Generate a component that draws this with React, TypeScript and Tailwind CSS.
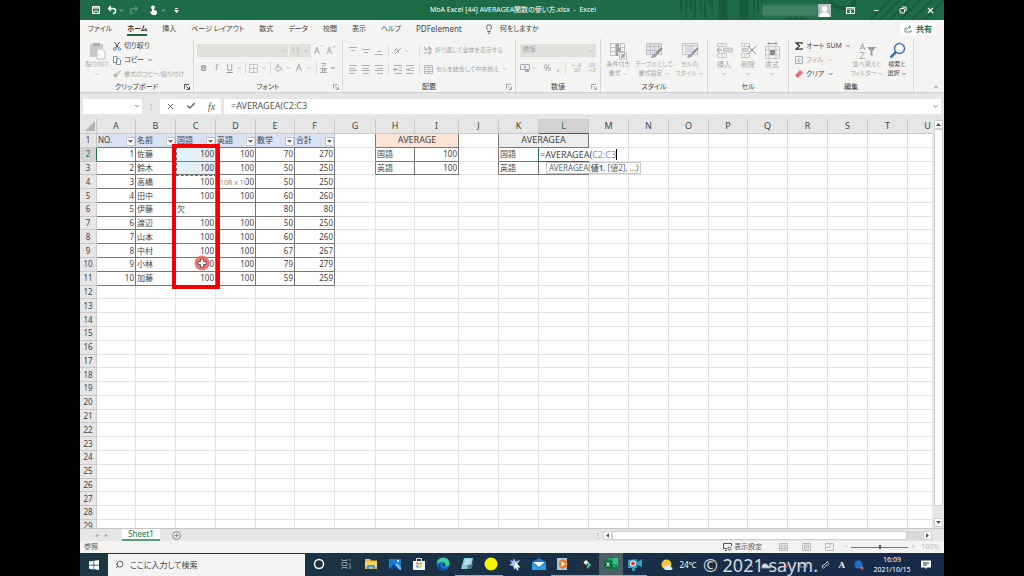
import type { ReactNode } from "react";
import clsx from "clsx";
import { Check, ChevronDown, ChevronUp, Lightbulb, Minus, Search, X } from "lucide-react";

type CellValue = { text: string; right?: boolean };

const columns = [
  { id: "A", width: "w-[39px]" },
  { id: "B", width: "w-[40px]" },
  { id: "C", width: "w-[40px]" },
  { id: "D", width: "w-[40px]" },
  { id: "E", width: "w-[39px]" },
  { id: "F", width: "w-[40px]" },
  { id: "G", width: "w-[41px]" },
  { id: "H", width: "w-[39px]" },
  { id: "I", width: "w-[44px]" },
  { id: "J", width: "w-[40px]" },
  { id: "K", width: "w-[40px]" },
  { id: "L", width: "w-[50px]" },
  { id: "M", width: "w-[40px]" },
  { id: "N", width: "w-[40px]" },
  { id: "O", width: "w-[40px]" },
  { id: "P", width: "w-[39px]" },
  { id: "Q", width: "w-[40px]" },
  { id: "R", width: "w-[40px]" },
  { id: "S", width: "w-[40px]" },
  { id: "T", width: "w-[40px]" },
  { id: "U", width: "w-[40px]" },
];

const rows = Array.from({ length: 29 }, (_, i) => i + 1);

const fieldNames = ["NO.", "名前", "国語", "英語", "数学", "合計"];

const students: (string | number)[][] = [
  [1, "佐藤", 100, 100, 70, 270],
  [2, "鈴木", 100, 100, 50, 250],
  [3, "高橋", 100, 100, 50, 250],
  [4, "田中", 100, 100, 60, 260],
  [5, "伊藤", "欠", "", 80, 80],
  [6, "渡辺", 100, 100, 50, 250],
  [7, "山本", 100, 100, 60, 260],
  [8, "中村", 100, 100, 67, 267],
  [9, "小林", 100, 100, 79, 279],
  [10, "加藤", 100, 100, 59, 259],
];

const summary: Record<string, CellValue> = {
  H2: { text: "国語" },
  I2: { text: "100", right: true },
  H3: { text: "英語" },
  I3: { text: "100", right: true },
  K2: { text: "国語" },
  K3: { text: "英語" },
};

const tabs = ["ファイル", "ホーム", "挿入", "ページ レイアウト", "数式", "データ", "校閲", "表示", "ヘルプ", "PDFelement"];

function getCell(col: number, row: number): CellValue | undefined {
  if (col < 6 && row >= 2 && row <= 11) {
    const value = students[row - 2][col];
    return { text: String(value), right: typeof value === "number" };
  }
  return summary[`${columns[col].id}${row}`];
}

function isTable(col: number, row: number) {
  if (row < 1 || col < 0) return false;
  if (col < 6) return row <= 11;
  return row <= 3 && (col === 7 || col === 8 || col === 10 || col === 11);
}

function Chevron({ dark = false }: { dark?: boolean }) {
  return <ChevronDown size={6} strokeWidth={3} className={clsx("shrink-0", dark ? "text-[#555]" : "text-[#b4b4b4]")} />;
}

function Divider() {
  return <span className="h-3 w-px shrink-0 bg-[#dcdcdc]" />;
}

function Launcher({ dark = false }: { dark?: boolean }) {
  return (
    <button aria-label="詳細" className="absolute right-[3px] bottom-[2px]">
      <svg width="6" height="6" viewBox="0 0 6 6" fill="none" stroke={dark ? "#555" : "#aaa"}>
        <path d="M.5 5V.5H5M2 2l3 3M5.5 2.5v3h-3" />
      </svg>
    </button>
  );
}

function Group({
  label,
  width,
  launcher,
  children,
}: {
  label: string;
  width: string;
  launcher?: "dark" | "light";
  children: ReactNode;
}) {
  return (
    <section className={clsx("relative flex shrink-0 flex-col border-r border-[#d6d6d6]", width)}>
      <div className="flex h-[43px] shrink-0">{children}</div>
      <h2 className="text-center text-[7px] leading-[10px] text-[#444]">{label}</h2>
      {launcher && <Launcher dark={launcher === "dark"} />}
    </section>
  );
}

function SmallButton({
  icon,
  label,
  dark,
  arrow,
  long,
}: {
  icon: ReactNode;
  label: string;
  dark?: boolean;
  arrow?: boolean;
  long?: boolean;
}) {
  return (
    <button
      className={clsx(
        "flex h-[14px] items-center gap-[3px] whitespace-nowrap",
        long ? "text-[6px]" : "text-[7px]",
        dark ? "text-[#444]" : "text-[#a8a8a8]",
      )}
    >
      <span className="shrink-0">{icon}</span>
      <span>{label}</span>
      {arrow && <Chevron dark={dark} />}
    </button>
  );
}

function LargeButton({
  icon,
  lines,
  width,
  dark,
  arrowBelow,
  size = "text-[6px]",
}: {
  icon: ReactNode;
  lines: string[];
  width: string;
  dark?: boolean;
  arrowBelow?: boolean;
  size?: string;
}) {
  return (
    <button className={clsx("flex shrink-0 flex-col items-center pt-[2px] leading-[9px] whitespace-nowrap", size, width, dark ? "text-[#444]" : "text-[#a8a8a8]")}>
      <span className="flex h-[19px] items-center">{icon}</span>
      {lines.map((line, i) => (
        <span key={line} className="flex items-center gap-px">
          {line}
          {i === 1 && <Chevron dark={dark} />}
        </span>
      ))}
      {arrowBelow && (
        <span className="flex h-[9px] items-center">
          <Chevron />
        </span>
      )}
    </button>
  );
}

function AlignIcon({ lines }: { lines: [number, number, number][] }) {
  return (
    <svg width="9" height="9" viewBox="0 0 9 9" stroke="#b0b0b0">
      {lines.map(([y, x1, x2]) => (
        <path key={y} d={`M${x1} ${y}H${x2}`} />
      ))}
    </svg>
  );
}

function IndentIcon({ out = false }: { out?: boolean }) {
  return (
    <svg width="10" height="9" viewBox="0 0 10 9" fill="none" stroke="#b0b0b0">
      <path d="M1 .5h8M6 3h3M6 5.5h3M1 8.5h8" />
      <path d={out ? "M5 4.5H1M2.500 3L1 4.500L2.500 6" : "M1 4.500H5M3.500 3L5 4.500L3.500 6"} stroke="#8ba0bd" />
    </svg>
  );
}

function TitleBar() {
  return (
    <header className="relative flex h-5 items-center bg-[#1e6c46] text-white">
      <svg className="absolute top-0 right-0" width="270" height="20" viewBox="0 0 270 20" fill="none" stroke="#185c3a">
        <path d="M7 0v14M12 0v18M17 0v12M21 0v18M27 0v14M31 0v18M48 0v14" strokeWidth="2" />
        <path d="M33 0h6v12z" fill="#185c3a" stroke="none" />
        <path d="M49 0v20M70 0v20" strokeWidth="9" />
        <path d="M80 0v18M84 0v14M88 0v18M92 0v12" strokeWidth="2" />
        <path d="M116 15v5M122 15v5M128 14v6" strokeWidth="3" />
        <path d="M157 0c2 10 22 12 24 0" strokeWidth="4" />
        <path d="M196 20L216 0M206 20L226 0M216 20L236 0M226 20L246 0M238 20L258 0M250 20L270 0" strokeWidth="2" />
      </svg>
      <div className="flex flex-1 items-center gap-[3px] pl-[11px]">
        <button aria-label="上書き保存">
          <svg width="10" height="10" viewBox="0 0 10 10" fill="none" stroke="#fff">
            <path d="M1.500 1.500h7v7h-7zM3 8V6h4v2" />
            <path d="M2 3h6" strokeWidth="2" opacity=".6" />
          </svg>
        </button>
        <button aria-label="元に戻す" className="ml-[3px] flex items-center gap-[2px]">
          <svg width="10" height="10" viewBox="0 0 10 10" fill="none" stroke="#fff" strokeWidth="1.400">
            <path d="M4 1L1.500 3.500L4 6M1.500 3.500H6c3.500 0 3.500 5 0 5" />
          </svg>
          <ChevronDown size={5} strokeWidth={3} />
        </button>
        <button aria-label="やり直し" className="ml-[2px] flex items-center gap-[2px] opacity-25">
          <svg width="10" height="10" viewBox="0 0 10 10" fill="none" stroke="#fff" strokeWidth="1.400">
            <path d="M6 1l2.500 2.500L6 6M8.500 3.500H4c-3.500 0-3.500 5 0 5" />
          </svg>
          <ChevronDown size={5} strokeWidth={3} />
        </button>
        <button aria-label="タッチ/マウス モードの切り替え" className="flex items-center gap-[3px]">
          <svg width="9" height="10" viewBox="0 0 9 10" fill="#fff">
            <circle cx="4" cy="2.500" r="2" />
            <path d="M3 2h2v3l3 1v2L7 10H3L1 7l2-1z" />
          </svg>
          <ChevronDown size={5} strokeWidth={3} />
        </button>
        <button aria-label="クイック アクセス ツール バーのユーザー設定" className="ml-[5px]">
          <svg width="5" height="5" viewBox="0 0 5 5" fill="#fff">
            <path d="M1 0h3v1H1zM0 2h5L2.500 5z" />
          </svg>
        </button>
      </div>
      <h1 className="text-[7px] whitespace-pre">MoA Excel [44] AVERAGEA関数の使い方.xlsx  -  Excel</h1>
      <div className="relative flex flex-1 items-center justify-end pr-[9px]">
        <span className="h-[11px] w-[56px] bg-[#4c8969] opacity-80 blur-[1px]" />
        <svg width="13" height="13" viewBox="0 0 12 12" className="mr-[15px]">
          <path d="M0 0h12v12H0z" fill="#b9c4be" />
          <circle cx="6" cy="4.500" r="2.600" fill="#fff" />
          <path d="M1 12c0-6 10-6 10 0z" fill="#fff" />
        </svg>
        <button aria-label="リボンの表示オプション" className="mr-[18px]">
          <svg width="9" height="9" viewBox="0 0 9 9" fill="none" stroke="#fff">
            <path d="M.5 1.500h8v6h-8zM.5 3h8M4.500 7V4.500M3.500 5.500l1-1l1 1" />
          </svg>
        </button>
        <button aria-label="最小化" className="mr-[19px]">
          <Minus size={7} strokeWidth={3} />
        </button>
        <button aria-label="元に戻す(縮小)" className="mr-[19px]">
          <svg width="8" height="8" viewBox="0 0 8 8" fill="none" stroke="#fff">
            <rect x="1" y="2.500" width="4.500" height="4.500" rx="1" />
            <path d="M3 1h4v4" />
          </svg>
        </button>
        <button aria-label="閉じる">
          <X size={9} strokeWidth={3} />
        </button>
      </div>
    </header>
  );
}

function TabBar() {
  return (
    <nav className="flex h-[18px] items-center pr-2 pl-2 text-[7px] text-[#444]">
      <div className="flex items-center gap-[15px]">
        {tabs.map((tab) => (
          <button
            key={tab}
            className={clsx(
              "h-[14px] border-b-2 leading-[13px] whitespace-nowrap",
              tab === "ホーム" ? "border-[#1e6c46] font-bold text-[#333]" : "border-transparent",
              tab === "PDFelement" && "text-[8px]",
            )}
          >
            {tab}
          </button>
        ))}
      </div>
      <button className="ml-[22px] flex items-center gap-[6px]">
        <Lightbulb size={10} />
        何をしますか
      </button>
      <button className="ml-auto flex h-3 items-center gap-1 bg-white px-1 text-[8px] font-bold text-[#1e6c46]">
        <svg width="8" height="8" viewBox="0 0 8 8" fill="none" stroke="#5b9676">
          <path d="M2.500 3H1v4h6V5M3 5c0-2 1-3 3.500-3M5 .5L6.800 2L5 3.500" />
        </svg>
        共有
      </button>
    </nav>
  );
}

function Ribbon() {
  return (
    <div className="flex h-[55px] border-b border-[#d0d0d0] pt-px">
      <Group label="クリップボード" width="w-[114px]" launcher="dark">
        <LargeButton
          width="w-[24px] ml-[5px]"
          lines={["貼り付け"]}
          arrowBelow
          icon={
            <svg width="17" height="18" viewBox="0 0 17 18">
              <path d="M1 2h13v13H1z" fill="#c9c7c7" />
              <path d="M4 1h7v3H4z" fill="#b0aeae" />
              <path d="M8 7h5l3 3v7H8z" fill="#fafafa" stroke="#c2c2c8" />
            </svg>
          }
        />
        <div className="ml-[4px] flex flex-col">
          <SmallButton
            dark
            label="切り取り"
            icon={
              <svg width="8" height="9" viewBox="0 0 8 9" fill="none" stroke="#555">
                <path d="M1.500 0l4 6M6.500 0l-4 6" />
                <circle cx="1.700" cy="7" r="1.300" stroke="#5b8ac0" />
                <circle cx="6.300" cy="7" r="1.300" stroke="#5b8ac0" />
              </svg>
            }
          />
          <SmallButton
            dark
            arrow
            label="コピー"
            icon={
              <svg width="8" height="9" viewBox="0 0 8 9" fill="#fff" stroke="#7c8ea3">
                <path d="M.5.5H4v6H.5zM3.500 2.500H6l1.500 1.500v4.500h-4z" />
              </svg>
            }
          />
          <SmallButton
            long
            label="書式のコピー/貼り付け"
            icon={
              <svg width="8" height="8" viewBox="0 0 8 8" fill="#b4b4b4">
                <path d="M7.500 0L8 1L5 4L4 3zM3 3l2 2l-2 3L0 5z" />
              </svg>
            }
          />
        </div>
      </Group>

      <Group label="フォント" width="w-[149px]" launcher="light">
        <div className="flex flex-col gap-[3px] pt-[5px] pl-[3px]">
          <div className="flex h-[13px] items-center text-[9px] text-[#9a9a9a]">
            <button aria-label="フォント名" className="mr-px flex h-full w-[91px] items-center justify-end bg-[#e1e0dc] pr-[2px]">
              <Chevron />
            </button>
            <button aria-label="フォント サイズ" className="mr-[3px] flex h-full w-[22px] items-center justify-between bg-[#e1e0dc] px-[2px] text-[8px] text-[#bbb]">
              11 <Chevron />
            </button>
            <button className="mr-[3px] flex">A<ChevronUp size={4} strokeWidth={4} /></button>
            <button className="flex text-[8px]">A<ChevronDown size={4} strokeWidth={4} /></button>
          </div>
          <div className="flex h-[16px] items-center text-[9px] text-[#999]">
            <button className="w-[13px] font-bold">B</button>
            <button className="w-[13px] font-['Liberation_Serif',serif] italic">I</button>
            <button className="w-[13px] underline">U</button>
            <Chevron />
            <span className="w-[3px]" />
            <Divider />
            <button aria-label="罫線" className="mx-[3px]">
              <svg width="9" height="9" viewBox="0 0 9 9" fill="none" stroke="#c4c4c4">
                <path d="M.5.5h8v8h-8zM4.500 0v9M0 4.500h9" />
              </svg>
            </button>
            <Chevron />
            <span className="w-[3px]" />
            <Divider />
            <button aria-label="塗りつぶしの色" className="mx-[3px]">
              <svg width="9" height="9" viewBox="0 0 9 9" fill="none" stroke="#aaa">
                <path d="M4 1L1 4.500L4 7.500L7 4.500zM4 0v4M8 5v2" />
              </svg>
            </button>
            <Chevron />
            <button className="w-[14px]">A</button>
            <Chevron />
            <span className="w-[4px]" />
            <Divider />
            <button aria-label="ふりがな" className="mx-[3px]">
              <svg width="7" height="10" viewBox="0 0 7 10" fill="none" stroke="#999">
                <path d="M1 .5h5L4 3M3 2v2M0 5.500h7M1.500 7.500h4v-2M0 9.500h7M2.500 5.500v4M4.500 5.500v4" strokeWidth=".8" />
              </svg>
            </button>
            <Chevron dark />
          </div>
        </div>
      </Group>

      <Group label="配置" width="w-[173px]" launcher="light">
        <div className="flex flex-col gap-[3px] pt-[4px] pl-[6px]">
          <div className="flex h-[15px] items-center gap-1">
            <button aria-label="上揃え"><AlignIcon lines={[[1.5, 0, 8], [4.5, 2, 6]]} /></button>
            <button aria-label="上下中央揃え"><AlignIcon lines={[[3.5, 0, 8], [6.5, 2, 6]]} /></button>
            <button aria-label="下揃え"><AlignIcon lines={[[5.5, 2, 6], [8.5, 0, 8]]} /></button>
            <Divider />
            <button aria-label="方向" className="flex items-center gap-[2px]">
              <svg width="9" height="9" viewBox="0 0 9 9" fill="none" stroke="#b0b0b0">
                <path d="M1 5l3-3M2 8l6-6M5 7.500a2 2 0 1 0-3-3" />
              </svg>
              <Chevron />
            </button>
            <span className="w-px" />
            <Divider />
            <SmallButton
              long
              label="折り返して全体を表示する"
              icon={
                <svg width="8" height="9" viewBox="0 0 8 9" fill="none" stroke="#a8a8a8">
                  <path d="M1 1v3h2V2M5 0v4h2V2H5M0 7h3M7 5v2H4M5.500 5.500L4 7l1.500 1.500" />
                </svg>
              }
            />
          </div>
          <div className="flex h-[16px] items-center gap-1">
            <button aria-label="左揃え"><AlignIcon lines={[[0.5, 0, 8], [3.5, 0, 6], [5.5, 0, 8], [8.5, 0, 6]]} /></button>
            <button aria-label="中央揃え"><AlignIcon lines={[[0.5, 0, 8], [3.5, 1, 7], [5.5, 0, 8], [8.5, 1, 7]]} /></button>
            <button aria-label="右揃え"><AlignIcon lines={[[0.5, 0, 8], [3.5, 2, 8], [5.5, 0, 8], [8.5, 2, 8]]} /></button>
            <Divider />
            <div className="flex gap-[2px]">
              <button aria-label="インデントを減らす"><IndentIcon out /></button>
              <button aria-label="インデントを増やす"><IndentIcon /></button>
            </div>
            <Divider />
            <SmallButton
              long
              arrow
              label="セルを結合して中央揃え"
              icon={
                <svg width="9" height="9" viewBox="0 0 9 9" fill="none" stroke="#b4b8c4">
                  <path d="M.5.5h8v8h-8zM0 2.500h9M0 6.500h9M4.500 0v2M4.500 7v2M2 4.500h5" />
                </svg>
              }
            />
          </div>
        </div>
      </Group>

      <Group label="数値" width="w-[85px]" launcher="light">
        <div className="flex flex-1 flex-col gap-[3px] pt-[5px] pr-[4px] pl-[4px]">
          <button className="flex h-[13px] items-center justify-between bg-[#e1e0dc] px-[2px] text-[7px] text-[#a8a8a8]">
            標準 <Chevron />
          </button>
          <div className="flex h-[16px] items-center justify-between text-[9px] text-[#a0a0a0]">
            <button aria-label="通貨表示形式" className="flex items-center gap-[2px]">
              <svg width="10" height="9" viewBox="0 0 10 9" fill="none" stroke="#a4abb5">
                <path d="M.5.5h9v5h-9z" />
                <circle cx="5" cy="3" r="1" />
                <path d="M5 7h4" strokeWidth="2" />
              </svg>
              <Chevron />
            </button>
            <button>%</button>
            <button className="font-bold">,</button>
            <Divider />
            <button className="text-[5px] leading-[5px]">←.0<br />.00</button>
            <button className="text-[5px] leading-[5px]">.00<br />→.0</button>
          </div>
        </div>
      </Group>

      <Group label="スタイル" width="w-[107px]">
        <LargeButton
          width="w-[34px]"
          lines={["条件付き", "書式"]}
          icon={
            <svg width="18" height="18" viewBox="0 0 18 18" fill="none" stroke="#c4c0c8">
              <path d="M1.500 1.500h14v12h-14zM1 5.500h15M1 9.500h15M6.500 1v13M11.500 1v13" />
              <path d="M7 2h3v4H7zM7 6h5v4H7zM7 10h2v4H7z" fill="#a5a3a5" stroke="none" />
              <path d="M10.500 10.500h7v7h-7z" fill="#f8f8f8" />
              <path d="M12 13h4M12 15h4M15.500 11.500l-3 5" stroke="#888" />
            </svg>
          }
        />
        <LargeButton
          width="w-[38px]"
          lines={["テーブルとして", "書式設定"]}
          icon={
            <svg width="18" height="17" viewBox="0 0 18 17" fill="none" stroke="#c4c0c8">
              <path d="M1.500 1.500h15v11h-15z" fill="#e4e2ea" />
              <path d="M1 4.500h16M1 8.500h16M5.500 1v12M9.500 1v12M13.500 1v12" />
              <path d="M17 6l-6 6" stroke="#8e8e8e" strokeWidth="2" />
              <path d="M6 16c1-4 3-5 5-4s0 4-5 4z" fill="#a5a3a5" stroke="none" />
            </svg>
          }
        />
        <LargeButton
          width="w-[33px]"
          lines={["セルの", "スタイル"]}
          icon={
            <svg width="18" height="17" viewBox="0 0 18 17" fill="none" stroke="#c4c0c8">
              <path d="M1.500 1.500h15v11h-15zM4.500 1v12M1 3.500h16" />
              <path d="M4 4h10v7H4z" fill="#dcdae4" stroke="none" />
              <path d="M17 6l-6 6" stroke="#8e8e8e" strokeWidth="2" />
              <path d="M6 16c1-4 3-5 5-4s0 4-5 4z" fill="#a5a3a5" stroke="none" />
            </svg>
          }
        />
      </Group>

      <Group label="セル" width="w-[81px]">
        <LargeButton
          width="ml-[4px] w-[24px]"
          size="text-[7px]"
          lines={["挿入"]}
          arrowBelow
          icon={
            <svg width="17" height="17" viewBox="0 0 17 17" fill="none" stroke="#c6c6c6">
              <path d="M1.500 1.500h9v3h-9zM6 1v4M1.500 11.500h9v4h-9zM6 11v5" />
              <path d="M7.500 6h9v4h-9z" fill="#d4d2da" />
              <path d="M6 8H1M3.500 5.500L1 8l2.500 2.500" stroke="#999" />
            </svg>
          }
        />
        <LargeButton
          width="w-[24px]"
          size="text-[7px]"
          lines={["削除"]}
          arrowBelow
          icon={
            <svg width="17" height="17" viewBox="0 0 17 17" fill="none" stroke="#c6c6c6">
              <path d="M1.500 1.500h8v3h-8zM5 1v4M1.500 11.500h8v4h-8zM5 11v5" />
              <path d="M2 6.500h6v3H2z" fill="#d4d2da" />
              <path d="M8 4l8 8M16 4l-8 8" stroke="#8c8c8c" />
            </svg>
          }
        />
        <LargeButton
          width="w-[24px]"
          size="text-[7px]"
          lines={["書式"]}
          arrowBelow
          icon={
            <svg width="17" height="18" viewBox="0 0 17 18" fill="none" stroke="#c6c6c6">
              <path d="M1.500 4.500h14v12h-14zM1 8h15M1 13h15M5 4v13M12 4v13" />
              <path d="M6 8h5v5H6z" fill="#8c8c8c" stroke="none" />
              <path d="M4 1.500h9M5.500 0L4 1.500L5.500 3M11.500 0L13 1.500L11.500 3" stroke="#999" />
            </svg>
          }
        />
      </Group>

      <Group label="編集" width="w-[125px]">
        <div className="flex w-[60px] shrink-0 flex-col pl-[6px]">
          <SmallButton
            dark
            arrow
            label="オート SUM"
            icon={
              <svg width="8" height="8" viewBox="0 0 8 8" fill="none" stroke="#333" strokeWidth="1.300">
                <path d="M7 2V.8H1L4.500 4L1 7.200h6V6" />
              </svg>
            }
          />
          <SmallButton
            arrow
            label="フィル"
            icon={
              <svg width="8" height="8" viewBox="0 0 8 8" fill="none" stroke="#a6adb8">
                <path d="M.5.5h7v7h-7zM4 2v4M2.500 4.500L4 6l1.500-1.500" />
              </svg>
            }
          />
          <SmallButton
            dark
            arrow
            label="クリア"
            icon={
              <svg width="8" height="8" viewBox="0 0 8 8">
                <path d="M5 0l3 2.500L3 8L0 5.500z" fill="#e8707c" />
              </svg>
            }
          />
        </div>
        <LargeButton
          width="w-[36px]"
          lines={["並べ替えと", "フィルター"]}
          icon={
            <svg width="17" height="18" viewBox="0 0 17 18" fill="none" stroke="#a8a8a8">
              <path d="M1 8L3.500 1.500L6 8M2 6h3M1 10.500h4.500L1 16.500h5" />
              <path d="M8 5h9l-3.500 4v5l-2-1V9z" fill="#9c9c9c" stroke="none" />
            </svg>
          }
        />
        <LargeButton
          dark
          width="w-[24px]"
          lines={["検索と", "選択"]}
          icon={
            <svg width="17" height="17" viewBox="0 0 17 17" fill="none" stroke="#3f73ad">
              <circle cx="10.500" cy="6.500" r="5" strokeWidth="1.500" fill="#fff" />
              <path d="M7 10l-5.500 5.500" strokeWidth="2.500" />
            </svg>
          }
        />
      </Group>
      <button aria-label="リボンを折りたたむ" className="mt-auto mr-1 mb-px ml-auto">
        <ChevronUp size={8} className="text-[#555]" />
      </button>
    </div>
  );
}

function FormulaBar() {
  return (
    <div className="flex h-[26px] items-center bg-[#e6e6e6] pr-[3px] pl-[3px]">
      <div className="flex h-[15px] w-[59px] items-center bg-white pr-[2px]">
        <input aria-label="名前ボックス" className="w-full min-w-0 text-[8px] outline-none" />
        <Chevron dark />
      </div>
      <span className="w-[18px] text-center text-[8px] text-[#999]">⋮</span>
      <div className="flex h-[15px] w-[61px] items-center justify-around bg-white text-[#555]">
        <button aria-label="キャンセル"><X size={9} strokeWidth={2.5} /></button>
        <button aria-label="入力"><Check size={10} strokeWidth={3} /></button>
        <button aria-label="関数の挿入" className="font-['Liberation_Serif',serif] text-[10px] italic">fx</button>
      </div>
      <div className="ml-[3px] flex h-[15px] flex-1 items-center bg-white pr-[2px] pl-[7px]">
        <input aria-label="数式バー" defaultValue="=AVERAGEA(C2:C3" className="flex-1 text-[9px] text-[#555] outline-none" />
        <ChevronDown size={7} strokeWidth={3} className="text-[#666]" />
      </div>
    </div>
  );
}

function Sheet() {
  return (
    <div className="relative min-w-0 flex-1 overflow-hidden bg-white">
      <table className="h-[415px] w-[857px] table-fixed border-separate border-spacing-0 text-[8px] leading-[12px] text-[#444]">
        <colgroup>
          <col className="w-[17px]" />
          {columns.map((col) => (
            <col key={col.id} className={col.width} />
          ))}
        </colgroup>
        <thead>
          <tr className="h-[15px] bg-[#e6e6e6] text-[9px]">
            <th className="border-r border-b border-[#c6c6c6]">
              <svg width="11" height="11" viewBox="0 0 11 11" className="ml-auto">
                <path d="M10 0v10H0z" fill="#b4b4b4" />
              </svg>
            </th>
            {columns.map((col) => (
              <th
                key={col.id}
                scope="col"
                className={clsx(
                  "border-r border-b font-normal",
                  col.id === "L" ? "border-[#c6c6c6] border-b-[#217346] bg-[#d2d2d2] text-[#217346]" : "border-[#c9c9c9]",
                )}
              >
                {col.id}
              </th>
            ))}
          </tr>
        </thead>
        <tbody>
          {rows.map((row) => (
            <tr key={row}>
              <th
                scope="row"
                className={clsx(
                  "border-r border-b border-[#c9c9c9] font-normal",
                  row === 2 ? "border-r-[#217346] bg-[#d2d2d2] text-[#217346]" : "bg-[#e6e6e6]",
                )}
              >
                {row}
              </th>
              {columns.map((col, i) => {
                if (row === 1 && i < 6) {
                  return (
                    <td key={col.id} className="border-r border-b border-[#777] border-r-[#aebbd4] bg-[#d9e1f2] pl-px">
                      <div className="flex h-[12px] items-center justify-between">
                        {fieldNames[i]}
                        <button aria-label={`${fieldNames[i]} フィルター`} className="mt-[2px] flex size-[9px] items-center justify-center border border-[#c8c8c8] bg-white">
                          <svg width="5" height="3" viewBox="0 0 5 3">
                            <path d="M0 0h5L2.500 3z" fill="#666" />
                          </svg>
                        </button>
                      </div>
                    </td>
                  );
                }
                if (row === 1 && (col.id === "H" || col.id === "K")) {
                  return (
                    <td
                      key={col.id}
                      colSpan={2}
                      className={clsx("border-r border-b border-[#777] text-center text-[9px]", col.id === "H" ? "bg-[#fce4d6]" : "bg-[#ededed]")}
                    >
                      {col.id === "H" ? "AVERAGE" : "AVERAGEA"}
                    </td>
                  );
                }
                if (row === 1 && (col.id === "I" || col.id === "L")) return null;
                const cell = getCell(i, row);
                return (
                  <td
                    key={col.id}
                    className={clsx(
                      "border-r border-b px-px",
                      isTable(i, row) || isTable(i + 1, row) ? "border-r-[#777]" : "border-r-[#e2e2e2]",
                      isTable(i, row) ? "border-b-[#777]" : "border-b-[#e2e2e2]",
                      cell?.right && "text-right",
                      col.id === "C" && (row === 2 || row === 3) && "bg-[#e5eff7]",
                    )}
                  >
                    {cell?.text}
                  </td>
                );
              })}
            </tr>
          ))}
        </tbody>
      </table>

      {/* Range being picked */}
      <div className="absolute top-[28px] left-[96px] h-[29px] w-[41px] border border-dashed border-[#2f7f78]" />
      <div className="absolute top-[58px] left-[140px] w-[26px] overflow-hidden bg-white text-[7px] leading-[11px] whitespace-nowrap text-[#888]">10R x 1C</div>

      {/* In-cell editor */}
      <div className="absolute top-[29px] left-[458px] flex h-[13px] w-[81px] items-center border-l border-[#217346] bg-white pl-px text-[9px] text-[#444]">
        =AVERAGEA(<span className="text-[#6b96cc]">C2:C3</span>
        <span className="h-[11px] w-px bg-black" />
      </div>
      <div className="absolute top-[42px] left-[458px] h-px w-[51px] bg-[#217346]" />
      <div className="absolute top-[43px] left-[466px] border border-[#c8c8c8] bg-white px-[2px] text-[8px] leading-[10px] whitespace-nowrap text-[#666]">
        AVERAGEA(<b>値1</b>, [値2], ...)
      </div>

      {/* Highlight frame */}
      <div className="absolute top-[25px] left-[92px] h-[145px] w-[48px] border-4 border-[#f40000]" />
      <svg className="absolute top-[136px] left-[114px]" width="16" height="16" viewBox="0 0 16 16">
        <circle cx="8" cy="8" r="7.500" fill="#ec6a62" opacity=".9" />
        <path d="M6.500 4h3v2.500H12v3H9.500V12h-3V9.500H4v-3h2.500z" fill="#fff" stroke="#444" strokeWidth=".8" />
      </svg>
    </div>
  );
}

function ScrollArrow({ d, label }: { d: string; label: string }) {
  return (
    <button aria-label={label} className="flex size-[9px] shrink-0 items-center justify-center border border-[#d0d0d0] bg-white">
      <svg width="5" height="5" viewBox="0 0 5 5" fill="#555">
        <path d={d} />
      </svg>
    </button>
  );
}

function SheetTabs() {
  return (
    <div className="flex h-[13px] items-center border-t border-[#c6c6c6] bg-[#e6e6e6] pr-[12px]">
      <div className="flex w-[42px] justify-center gap-[7px] text-[6px] text-[#aaa]">
        <span>◂</span>
        <span>▸</span>
      </div>
      <button className="h-full w-[38px] border-b-2 border-[#5c9c7b] bg-white text-[8px] leading-[10px] text-[#217346]">Sheet1</button>
      <button aria-label="新しいシート" className="ml-[12px]">
        <svg width="9" height="9" viewBox="0 0 9 9" fill="none" stroke="#888">
          <circle cx="4.500" cy="4.500" r="4" />
          <path d="M4.500 2.500v4M2.500 4.500h4" />
        </svg>
      </button>
      <span className="ml-auto w-[9px] text-[8px] text-[#999]">⋮</span>
      <div className="flex w-[329px] items-center bg-[#dadada]">
        <ScrollArrow label="左へスクロール" d="M4 0v5L1 2.500z" />
        <span className="h-[9px] w-[295px] border border-[#d0d0d0] bg-white" />
        <span className="flex-1" />
        <ScrollArrow label="右へスクロール" d="M1 0v5l3-2.500z" />
      </div>
    </div>
  );
}

function StatusBar() {
  return (
    <div className="flex h-[12px] items-center bg-[#f3f3f2] pr-[5px] pl-1 text-[7px] text-[#555]">
      <span>参照</span>
      <button className="ml-auto flex items-center gap-[2px]">
        <svg width="9" height="8" viewBox="0 0 9 8" fill="none" stroke="#555">
          <path d="M4 5.500H.5v-5h8V3M2 7.500h2" />
          <circle cx="6.500" cy="5.500" r="1.500" />
        </svg>
        表示設定
      </button>
      <div className="ml-[17px] flex gap-[14px]">
        {["M.5.5h8v7h-8zM0 3h9M0 5.500h9M3 0v8M6 0v8", "M.5.5h8v7h-8zM2.500 2v4h4V2zM3 4h3", "M.5.5h8v7h-8zM5 0v4.500H0"].map((d) => (
          <button key={d} aria-label="表示モード">
            <svg width="9" height="8" viewBox="0 0 9 8" fill="none" stroke="#bbb">
              <path d={d} />
            </svg>
          </button>
        ))}
      </div>
      <div className="ml-[10px] flex items-center gap-[3px] text-[#bbb]">
        <button>−</button>
        <input
          type="range"
          aria-label="ズーム"
          min={10}
          max={400}
          defaultValue={205}
          className="h-px w-[57px] appearance-none bg-[#777] [&::-webkit-slider-thumb]:h-[4px] [&::-webkit-slider-thumb]:w-[2px] [&::-webkit-slider-thumb]:appearance-none [&::-webkit-slider-thumb]:bg-[#555]"
        />
        <button>+</button>
      </div>
      <span className="ml-[6px] text-[#bbb]">100%</span>
    </div>
  );
}

const apps: { name: string; running?: boolean; active?: boolean; icon: ReactNode }[] = [
  { name: "Cortana", icon: <circle cx="6" cy="7" r="4.500" fill="none" stroke="#fff" strokeWidth="1.500" /> },
  {
    name: "タスク ビュー",
    icon: <path d="M3 2v1.500h5V2M3 12v-1.500h5V12M3 5.500h5v3H3zM11 2v2M11 6v6" fill="none" stroke="#8d9ba3" />,
  },
  {
    name: "エクスプローラー",
    icon: (
      <>
        <path d="M1 2h5l1 1.500h6V12H1z" fill="#f5b93a" />
        <path d="M1 5h12v5H1z" fill="#fcd462" />
        <path d="M3 12V8h8v4H9v-2H5v2z" fill="#3f9be0" />
      </>
    ),
  },
  {
    name: "フォト",
    icon: (
      <>
        <path d="M1 2h12v11H1z" fill="#1b7ad1" />
        <path d="M1 12l5-5l6 6H1z" fill="#0c3f83" />
        <path d="M7 8l2-2l4 4v3h-1z" fill="#74baf0" />
        <circle cx="10" cy="4" r="1" fill="#fff" />
      </>
    ),
  },
  {
    name: "Microsoft Store",
    icon: (
      <>
        <path d="M4.500 4V1.500h5V4" fill="none" stroke="#e8e8e8" />
        <path d="M1 4h12v9H1z" fill="#f3f3f3" />
        <path d="M4.500 5.500h2v2h-2z" fill="#e5532d" />
        <path d="M7.500 5.500h2v2h-2z" fill="#7fb800" />
        <path d="M4.500 8.500h2v2h-2z" fill="#2a9fe0" />
        <path d="M7.500 8.500h2v2h-2z" fill="#f5b400" />
      </>
    ),
  },
  {
    name: "Microsoft Edge",
    icon: (
      <>
        <circle cx="7" cy="7" r="6.500" fill="#1679cc" />
        <path d="M1 6C2-1 14-1 13.500 7c0 2-4 3-5 1c1-3-2-4-4-3S1 6 1 6z" fill="#3ccf9b" />
        <path d="M5 6c-2 4 2 7 6 5c-3 4-8 2-9-1s1-4 3-4z" fill="#0c4f9c" />
        <circle cx="8" cy="7.500" r="1.500" fill="#1b3442" />
      </>
    ),
  },
  {
    name: "メモ帳",
    running: true,
    icon: (
      <>
        <path d="M4 1h9l-2 11H1z" fill="#8fc9de" />
        <path d="M5 3h6M4.500 5h6M4 7h6" stroke="#d8f0f8" />
        <path d="M8 8l5-1l-2 5H7z" fill="#557886" />
      </>
    ),
  },
  { name: "マーカー", running: true, icon: <circle cx="7" cy="7" r="6.500" fill="#fdf500" /> },
  {
    name: "ポインター",
    icon: (
      <>
        <path d="M6 1l1.500 3.500L12 3l-2.500 4l3 4l-4.500-1l-2 3l-1-4L1 8l3-2L2 3l3 1z" fill="#a9c0ea" />
        <path d="M7 5l5 5H9.500l1 3l-1.500.5l-1-3L7 12z" fill="#fff" />
      </>
    ),
  },
  {
    name: "メール",
    icon: (
      <>
        <path d="M0 5l7-4l7 4v8H0z" fill="#1479c9" />
        <path d="M1 5h12l-6 5z" fill="#f4f8fb" />
        <path d="M0 6l7 5l7-5v7H0z" fill="#2f9ee8" />
      </>
    ),
  },
  {
    name: "メディア プレーヤー",
    running: true,
    icon: (
      <>
        <path d="M1 1h10v12H1z" fill="#a8c9dd" />
        <circle cx="7" cy="7" r="4.500" fill="#ee7a28" />
        <path d="M5.500 4.500l4 2.500l-4 2.500z" fill="#fff" />
      </>
    ),
  },
  {
    name: "Filmora",
    running: true,
    icon: (
      <>
        <path d="M0 0h14v14H0z" fill="#233039" />
        <path d="M6 3l2.500 2.500L6 8L3.500 5.500z" fill="#fff" />
        <path d="M8 5l3 3l-4 4V9l1-1z" fill="#3fd3b4" />
      </>
    ),
  },
  {
    name: "Excel",
    running: true,
    active: true,
    icon: (
      <>
        <path d="M4 1h10v12H4z" fill="#21a366" />
        <path d="M9 1h5v6H9z" fill="#33c481" />
        <path d="M4 7h5v6H4zM9 10h5v3H9z" fill="#107c41" />
        <path d="M0 3.500h8v8H0z" fill="#0f6a38" />
        <path d="M2.500 5.500l3 4M5.500 5.500l-3 4" stroke="#fff" />
      </>
    ),
  },
  {
    name: "録画",
    running: true,
    icon: (
      <>
        <path d="M0 3l9-1v9H0zM9 5l5-3v8L9 8zM4 11h3v3H4z" fill="#2f9fc0" />
        <circle cx="5" cy="6.500" r="3" fill="#fff" />
        <circle cx="5" cy="6.500" r="2" fill="#e0322c" />
      </>
    ),
  },
];

function Taskbar() {
  return (
    <footer className="relative flex h-[23px] items-center bg-linear-to-r from-[#1c3642] to-[#182a4a] text-white">
      <button aria-label="スタート" className="flex w-[28px] justify-center">
        <svg width="10" height="10" viewBox="0 0 10 10" fill="#fff">
          <path d="M0 1.500L4.500.8v4H0zM5.200.7L10 0v4.800H5.200zM0 5.400h4.500v4L0 8.700zM5.200 5.400H10V10l-4.800-.7z" />
        </svg>
      </button>
      <label className="flex h-[22px] w-[197px] items-center gap-[6px] bg-[#f3f3f3] pl-[7px] text-[#333]">
        <Search size={9} className="-scale-x-100" />
        <input aria-label="検索" placeholder="ここに入力して検索" className="min-w-0 flex-1 text-[8px] outline-none placeholder:text-[#444]" />
      </label>
      <div className="flex h-full items-center pl-[2px]">
        {apps.map((app, i) => (
          <button
            key={app.name}
            aria-label={app.name}
            className={clsx(
              "flex h-full items-center justify-center border-b",
              i < 2 ? "w-[26px]" : "w-[24px]",
              app.running ? "border-[#7cb4dc]" : "border-transparent",
              app.active && "bg-[#4c606a]",
            )}
          >
            <svg width="14" height="14" viewBox="0 0 14 14">{app.icon}</svg>
          </button>
        ))}
      </div>
      <div className="ml-auto flex items-center pr-[13px] text-[7px] leading-[10px]">
        <button className="mr-[124px] flex items-center gap-[6px] text-[8px]">
          <svg width="12" height="12" viewBox="0 0 12 12">
            <circle cx="5.500" cy="5.500" r="5" fill="#f9c440" />
            <path d="M5 11a2 2 0 0 1 0-4a3 3 0 0 1 5 1a1.500 1.500 0 0 1 0 3z" fill="#dbe9f5" />
          </svg>
          24℃
        </button>
        <svg width="9" height="9" viewBox="0 0 9 9" fill="none" stroke="#b8c0cc">
          <path d="M1 7l6-6M3 5c-3 0-2 4 0 3s1-3 3-3s2-3 0-3" />
        </svg>
        <span className="mx-[9px] font-['Liberation_Serif',serif] text-[9px] font-bold">A</span>
        <svg width="10" height="10" viewBox="0 0 10 10" className="mr-[9px]">
          <circle cx="4.500" cy="4.500" r="4" fill="#1a6ed0" />
          <circle cx="8" cy="8" r="1.500" fill="#e4643c" />
        </svg>
        <time className="w-[38px] text-center text-[7px]">
          16:09
          <br />
          2021/10/15
        </time>
        <button aria-label="通知" className="ml-[10px]">
          <svg width="10" height="10" viewBox="0 0 10 10">
            <path d="M0 .5h10v7H6L4.500 9.500V7.500H0z" fill="#fff" />
            <path d="M2 3h6M2 5h4" stroke="#182a4a" />
          </svg>
        </button>
      </div>
      <svg className="absolute top-[6px] right-[130px]" width="90" height="12" viewBox="0 0 90 12" fill="none" stroke="#8d98a8">
        <path d="M23 8l3-3l3 3" />
        <path d="M38 7c0-3 6-3 6 0h3v2h-9z" fill="#dfe6ee" />
        <circle cx="62" cy="7" r="2" fill="#d8322c" stroke="none" />
        <path d="M76 4h7v4h-7z" />
      </svg>
      <p className="absolute right-[126px] bottom-0 text-[18px] leading-[22px] whitespace-nowrap text-[#d5dade]">© 2021 saym.</p>
    </footer>
  );
}

export default function App() {
  return (
    <div className="h-screen overflow-hidden bg-black px-20">
      <main className="flex h-full flex-col bg-[#f4f4f2] font-['Noto_Sans','Noto_Sans_CJK_JP',sans-serif] [font-feature-settings:'palt']">
        <TitleBar />
        <TabBar />
        <Ribbon />
        <FormulaBar />
        <div className="flex min-h-0 flex-1 bg-[#e6e6e6]">
          <Sheet />
          <div className="flex w-[12px] flex-col items-center py-px">
            <ScrollArrow label="上へスクロール" d="M0 4h5L2.500 1z" />
            <span className="w-[9px] flex-1 border border-[#d0d0d0] bg-white" />
            <span className="h-[12px]" />
            <ScrollArrow label="下へスクロール" d="M0 1h5L2.500 4z" />
          </div>
        </div>
        <SheetTabs />
        <StatusBar />
        <Taskbar />
      </main>
    </div>
  );
}
